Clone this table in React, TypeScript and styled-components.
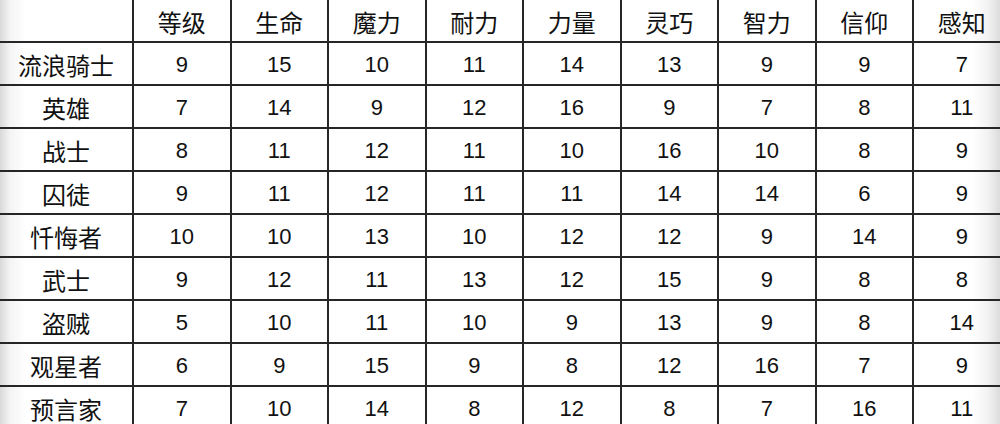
import { Fragment } from "react";
import { createGlobalStyle, styled } from "styled-components";

const GlobalStyle = createGlobalStyle`
  html, body {
    margin: 0;
    padding: 0;
  }
  body {
    width: 1000px;
    height: 424px;
    overflow: hidden;
    background: linear-gradient(
      to right,
      #d9d9d9 0px,
      #f4f4f4 10px,
      #ffffff 26px,
      #ffffff 972px,
      #f2f2f2 988px,
      #dcdcdc 1000px
    );
    font-family: "Liberation Sans", "Noto Sans CJK SC", sans-serif;
    color: #111;
  }
`;

const Table = styled.div`
  display: grid;
  grid-template-columns: 134px repeat(9, 97.5px);
  grid-auto-rows: 43px;
  width: 1012px;
`;

const Cell = styled.div<{ $cjk?: boolean }>`
  box-sizing: border-box;
  display: flex;
  align-items: center;
  justify-content: center;
  border-right: 2px solid #262626;
  border-bottom: 2px solid #262626;
  padding-top: 2px;
  font-family: ${(p) =>
    p.$cjk
      ? `"Noto Sans CJK SC", "Liberation Sans", sans-serif`
      : `"Liberation Sans", "Noto Sans CJK SC", sans-serif`};
  font-size: ${(p) => (p.$cjk ? "24px" : "22px")};
  font-weight: 400;
`;

const heads = ["等级", "生命", "魔力", "耐力", "力量", "灵巧", "智力", "信仰", "感知"];

const rows: [string, number[]][] = [
  ["流浪骑士", [9, 15, 10, 11, 14, 13, 9, 9, 7]],
  ["英雄", [7, 14, 9, 12, 16, 9, 7, 8, 11]],
  ["战士", [8, 11, 12, 11, 10, 16, 10, 8, 9]],
  ["囚徒", [9, 11, 12, 11, 11, 14, 14, 6, 9]],
  ["忏悔者", [10, 10, 13, 10, 12, 12, 9, 14, 9]],
  ["武士", [9, 12, 11, 13, 12, 15, 9, 8, 8]],
  ["盗贼", [5, 10, 11, 10, 9, 13, 9, 8, 14]],
  ["观星者", [6, 9, 15, 9, 8, 12, 16, 7, 9]],
  ["预言家", [7, 10, 14, 8, 12, 8, 7, 16, 11]],
];

export default function App() {
  return (
    <>
      <GlobalStyle />
      <Table>
        <Cell $cjk />
        {heads.map((h) => (
          <Cell key={h} $cjk>
            {h}
          </Cell>
        ))}
        {rows.map(([name, stats]) => (
          <Fragment key={name}>
            <Cell $cjk>{name}</Cell>
            {stats.map((v, i) => (
              <Cell key={i}>{v}</Cell>
            ))}
          </Fragment>
        ))}
      </Table>
    </>
  );
}
